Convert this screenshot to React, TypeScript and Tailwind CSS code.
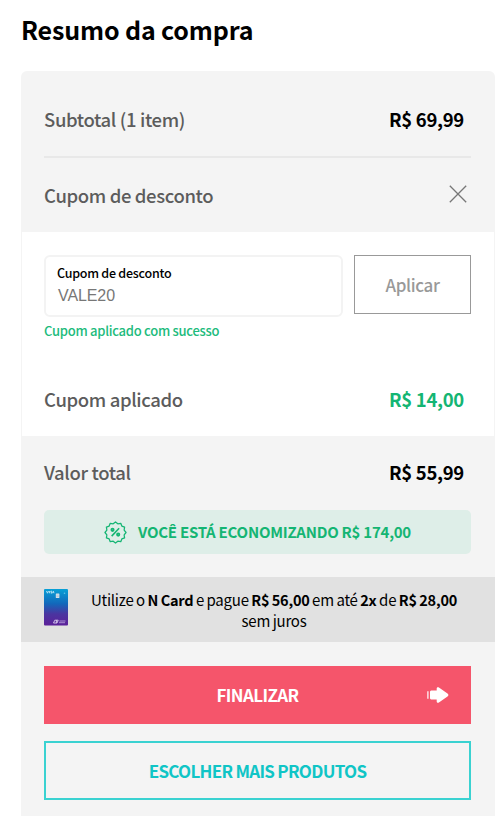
import React from 'react';

interface SummaryRowProps {
  label: string;
  value: string;
  valueClass?: string;
  className?: string;
}

const SummaryRow: React.FC<SummaryRowProps> = ({ label, value, valueClass = 'text-black', className = '' }) => (
  <div className={`flex items-center justify-between pr-[7px] ${className}`}>
    <span className="text-[18.5px] font-medium tracking-[-0.37px] text-[#5c5c5c]">{label}</span>
    <span className={`text-[18.5px] font-bold tracking-[-0.3px] ${valueClass}`}>{value}</span>
  </div>
);

const CloseIcon = () => (
  <svg width="18" height="18" viewBox="0 0 18 18" fill="none" stroke="#777" strokeWidth="1.3">
    <path d="M.8.8l16.4 16.4M17.2.8L.8 17.2" />
  </svg>
);

const DiscountIcon = () => (
  <svg width="23" height="23" viewBox="0 0 24 24" fill="none" stroke="#14b573" strokeWidth="1.3" strokeLinejoin="round">
    <path d="M12 1l2.4 1.9 3.1-.5 1.1 2.9 2.9 1.1-.5 3.1L23 12l-2 2.5.5 3.1-2.9 1.1-1.1 2.9-3.1-.5L12 23l-2.4-1.9-3.1.5-1.1-2.9-2.9-1.1.5-3.1L1 12l2-2.5-.5-3.1 2.9-1.1 1.1-2.9 3.1.5z" />
    <circle cx="8.9" cy="9.2" r="1.2" strokeWidth="1.9" />
    <circle cx="14.8" cy="14.2" r="1.2" strokeWidth="1.9" />
    <path d="M15.8 7.6L8 15.8" strokeWidth="1.6" />
  </svg>
);

const ArrowIcon = () => (
  <svg width="22" height="16" viewBox="0 0 22 16" fill="#fff">
    <path d="M.3 4.3h1.2v7.4H.3z" />
    <path d="M5 3.5h4.7V1.6c0-1.3 1.3-1.8 2.2-1l8.6 5.9c1.2.9 1.2 2.1 0 3l-8.6 5.9c-.9.8-2.2.3-2.2-1v-1.9H5c-1.1 0-2-.5-2-1.3V4.8c0-.8.9-1.3 2-1.3z" />
  </svg>
);

const CreditCard = () => (
  <svg width="24" height="37" viewBox="0 0 24 37">
    <defs>
      <linearGradient id="cardFill" x1="0" y1="0" x2="0" y2="1">
        <stop offset="0" stopColor="#08a0d6" />
        <stop offset=".4" stopColor="#1268bb" />
        <stop offset=".68" stopColor="#4a35a0" />
        <stop offset="1" stopColor="#5c2099" />
      </linearGradient>
    </defs>
    <rect width="24" height="36.5" rx="1" fill="url(#cardFill)" />
    <path d="M2.5 2l1 2.2 1-2.2M5.6 2v2.2M7.8 2.2H6.9v.9h.9v1h-1M8.7 4.2l.6-2 .7 2" stroke="#bfe8f7" strokeWidth=".9" fill="none" />
    <rect x="11.8" y="4.6" width="3.6" height="4.4" rx=".5" fill="#d3e0e8" />
    <path d="M12.4 6.2h2.4M12.4 7.5h2.4" stroke="#8fb3cc" strokeWidth=".4" />
    <circle cx="20.5" cy="4.2" r=".8" fill="#5cc4e8" />
    <path d="M9.5 34l1.3-2.8h3.4L13 34zM12.4 31v3" stroke="#d9c9ee" strokeWidth=".9" fill="none" />
    <path d="M15.5 32h6M15 33.7h6" stroke="#a98bd0" strokeWidth="1" />
  </svg>
);

const App: React.FC = () => {
  return (
    <main className="h-[816px] w-[500px] overflow-hidden bg-white pl-[21px] font-['Noto_Sans_CJK_JP','Noto_Sans_CJK_SC',sans-serif]">
      <h1 className="h-[71px] pt-[11px] text-[25px] leading-[36px] font-bold tracking-[-0.15px] whitespace-nowrap text-black">
        Resumo da compra
      </h1>

      <section className="h-[745px] w-[474px] rounded-t-[6px] bg-[#f4f4f4]">
        <div className="pr-[24px] pl-[23px]">
          <SummaryRow label="Subtotal (1 item)" value="R$ 69,99" className="h-[87px] border-b-2 border-[#e8e8e8] pt-[13px]" />
          <div className="flex h-[74px] items-center justify-between pr-[4px]">
            <span className="pt-px text-[18.5px] font-medium tracking-[-0.37px] text-[#5c5c5c]">Cupom de desconto</span>
            <button type="button" aria-label="Fechar" className="pb-[2px]">
              <CloseIcon />
            </button>
          </div>
        </div>

        <div className="h-[204px] border-x border-[#f4f4f4] bg-white pr-[23px] pl-[22px] pt-[23px]">
          <div className="flex items-start justify-between">
            <div className="h-[62px] w-[299px] rounded-[6px] border-2 border-[#f3f3f3] px-[11px] pt-[7px]">
              <div className="text-[12.5px] leading-[18px] font-medium tracking-[-0.25px] text-black">Cupom de desconto</div>
              <div className="pl-px font-['Liberation_Sans',sans-serif] text-[16px] leading-[27px] tracking-[-0.1px] text-[#777]">VALE20</div>
            </div>
            <button type="button" className="h-[59px] w-[117px] border border-[#999] text-[17px] font-medium tracking-[-0.35px] text-[#999]">
              Aplicar
            </button>
          </div>
          <p className="mt-[5px] text-[13px] leading-[18px] font-medium tracking-[-0.27px] text-[#21bb7c]">Cupom aplicado com sucesso</p>
          <SummaryRow label="Cupom aplicado" value="R$ 14,00" valueClass="text-[#14b573]" className="mt-[45px] h-[30px]" />
        </div>

        <div className="h-[141px] pr-[24px] pl-[23px]">
          <SummaryRow label="Valor total" value="R$ 55,99" className="h-[74px]" />
          <div className="flex h-[44px] items-center justify-center gap-[11px] rounded-[5px] bg-[#deeee8] text-[15px] font-bold tracking-[-0.25px] text-[#14b573]">
            <DiscountIcon />
            <span>VOCÊ ESTÁ ECONOMIZANDO R$ 174,00</span>
          </div>
        </div>

        <div className="flex h-[65px] items-start bg-[#e1e1e1] pr-[24px] pl-[23px]">
          <div className="pt-[12px]">
            <CreditCard />
          </div>
          <p className="flex-1 pt-[12px] pl-[9px] text-center text-[15px] leading-[21px] tracking-[-0.25px] [word-spacing:-0.5px] whitespace-nowrap text-black">
            Utilize o <b className="text-[14.5px] leading-none font-bold">N Card</b> e pague{' '}
            <b className="text-[14.5px] leading-none font-bold">R$ 56,00</b> em até <b className="text-[14.5px] leading-none font-bold">2x</b> de{' '}
            <b className="text-[14.5px] leading-none font-bold">R$ 28,00</b>
            <br />
            sem juros
          </p>
        </div>

        <div className="flex flex-col gap-[17px] pt-[24px] pr-[24px] pl-[23px]">
          <button type="button" className="relative h-[58px] bg-[#f5556b] text-[17px] font-bold tracking-[-0.6px] text-white">
            FINALIZAR
            <span className="absolute top-[21px] right-[22px]">
              <ArrowIcon />
            </span>
          </button>
          <button type="button" className="h-[59px] border-2 border-[#3ad2d1] text-[17px] font-bold tracking-[-0.72px] text-[#10c5c6]">
            ESCOLHER MAIS PRODUTOS
          </button>
        </div>
      </section>
    </main>
  );
};

export default App;
